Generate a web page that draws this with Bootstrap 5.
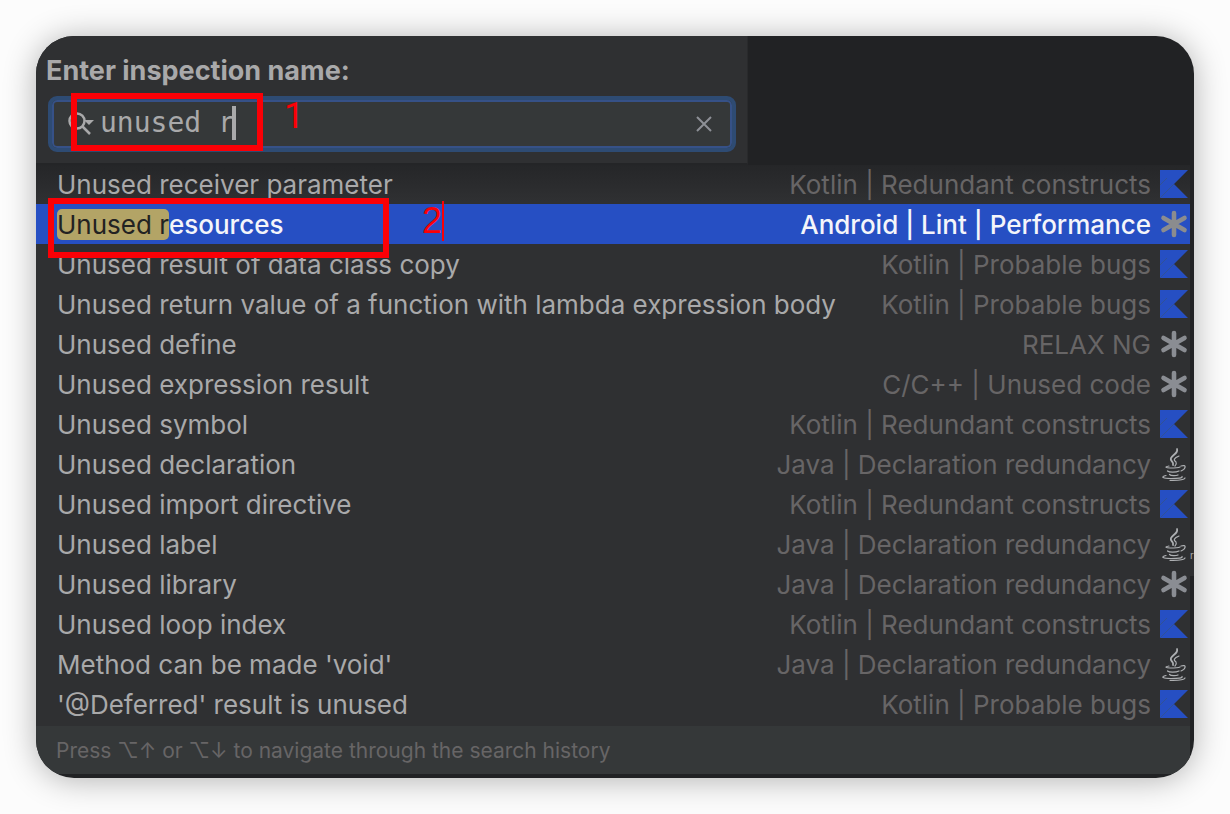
<!DOCTYPE html>
<html lang="en">
<head>
<meta charset="utf-8">
<meta name="viewport" content="width=device-width, initial-scale=1">
<title>Enter inspection name</title>
<link href="https://cdn.jsdelivr.net/npm/bootstrap@5.3.0/dist/css/bootstrap.min.css" rel="stylesheet">
<style>
  body { background: #fcfcfc; font-family: Inter, "Liberation Sans", sans-serif; color: #a9a9aa; }
  .window-frame { margin: 36px; padding: 0 4px 4px 0; background: #212224; border-radius: 38px; box-shadow: 0 2px 32px rgba(0,0,0,.3); overflow: hidden; }
  .search-head { width: 712px; max-width: 100%; height: 129px; padding: 16px 11px 12px 10px; background: #2f3032; border-bottom: 2px solid #242527; border-right: 1px solid #292a2c; }
  .search-head label { font-size: 27px; line-height: 38px; font-weight: 700; }
  .search-box { height: 56px; margin: 6px 0 0 2px; padding: 0 20px 0 12px; border: 4px solid #2e4b73; border-radius: 9px; background: #353839; box-shadow: inset 0 0 0 2px #365187; }
  .search-box input { font: 28px/40px "DejaVu Sans Mono", monospace; color: #a9a9aa; background: none; border: 0; outline: 0; padding: 0 0 2px; caret-color: transparent; }
  .text-caret { left: 180px; top: 6px; width: 4px; height: 34px; background: #a9a9aa; }
  .icon-button { background: none; border: 0; padding: 0; line-height: 0; }
  .results { background: #2f3032; padding-bottom: 2px; }
  .result-row { height: 40px; padding: 0 1px 0 21px; border: 0; background: none; color: #a9a9aa; font-size: 26px; line-height: 38px; text-align: left; white-space: nowrap; }
  .result-row > span { padding-top: 2px; }
  .result-row .group-name { color: #676566; margin-right: 8px; }
  .result-row svg { flex: none; }
  .result-row.top-row { height: 39px; padding-bottom: 1px; background: linear-gradient(#252628, #2f3032 36px); }
  .result-row.picked, .result-row.picked .group-name { background: #264fc3; color: #f4f5fa; font-weight: 500; }
  .match-text { background: #b3a466; color: #222; border-radius: 5px; font-weight: 400; }
  .hint-bar { height: 48px; padding: 1px 20px 0; background: #353839; color: #676566; font-size: 21px; line-height: 48px; }
  .outline-mark { border: 6px solid #fb0006; pointer-events: none; }
  .mark-query { left: 35px; top: 57px; width: 192px; height: 58px; }
  .mark-result { left: 12px; top: 162px; width: 341px; height: 60px; }
  .step { color: #fb0006; font: 36px/40px "Liberation Sans", sans-serif; }
  .step-one { left: 248px; top: 60px; font-family: Roboto, sans-serif; }
  .step-two { left: 386px; top: 165px; border-right: 2px solid #fb0006; }
  .edge-tab { right: 0; top: 494px; width: 4px; height: 46px; background: #2e2f31; font-size: 10px; line-height: 50px; }
</style>
</head>
<body>
<svg class="d-none" aria-hidden="true">
  <symbol id="kotlin" viewBox="0 0 30 30"><path fill="#264fc3" d="M1 1H29L15 15L29 29H1Z"/><path stroke="#315294" stroke-width="1" d="M1 16L8 9M1 29L15 15"/></symbol>
  <symbol id="asterisk" viewBox="0 0 30 30"><path fill="none" stroke="currentColor" stroke-width="4.6" stroke-linecap="round" d="M15 4V26M4.500 9L25.500 21M25.500 9L4.500 21"/></symbol>
  <symbol id="java" viewBox="0 0 30 34"><g fill="none" stroke="#aeb0b3" stroke-linecap="round" stroke-width="1.200"><path stroke-width="1.800" d="M18 2C20 7 10 9 12 13C13 15 15 16 14 18"/><path d="M20 9C15 11 14 13 17 15C18 17 17 18 16 19"/><path d="M10 19C5 20 7 21 11 21C15 21 19 21 21 20M8.500 24C10 25.500 17 25.500 20 24M10.500 27.500C12 29 17 29 19 28M22 19C28 17 27 22 22 24"/><path d="M7 28.500C1 30 4 31.500 12 31.500C19 31.500 24 31 23 29.500M11 33.300C19 33.500 25 33 26 31"/></g></symbol>
</svg>
<main class="window-frame position-relative">
  <header class="search-head">
    <label class="d-block" for="inspection">Enter inspection name:</label>
    <div class="search-box d-flex align-items-center position-relative">
      <button class="icon-button" type="button" aria-label="Search history">
        <svg width="36" height="32" viewBox="0 0 36 32" fill="none" stroke="#a9a9aa" stroke-width="2.500"><circle cx="13" cy="13" r="7.500"/><path d="M18 18L26 26"/><path fill="#a9a9aa" stroke="none" d="M20 12H30L25 17Z"/></svg>
      </button>
      <input class="flex-grow-1" id="inspection" type="text" value="unused r" autocomplete="off" spellcheck="false">
      <span class="text-caret position-absolute"></span>
      <button class="icon-button" type="button" aria-label="Clear">
        <svg width="16" height="16" viewBox="0 0 16 16" stroke="#8d9096" stroke-width="2"><path d="M1 1L15 15M15 1L1 15"/></svg>
      </button>
    </div>
  </header>
  <section class="results d-flex flex-column" aria-label="Inspections">
    <button type="button" class="result-row top-row d-flex align-items-center"><span class="flex-grow-1">Unused receiver parameter</span><span class="group-name">Kotlin | Redundant constructs</span><svg width="30" height="30"><use href="#kotlin"/></svg></button>
    <button type="button" class="result-row picked d-flex align-items-center"><span class="flex-grow-1"><span class="match-text">Unused r</span>esources</span><span class="group-name">Android | Lint | Performance</span><svg width="30" height="30" color="#8b8c8e"><use href="#asterisk"/></svg></button>
    <button type="button" class="result-row d-flex align-items-center"><span class="flex-grow-1">Unused result of data class copy</span><span class="group-name">Kotlin | Probable bugs</span><svg width="30" height="30"><use href="#kotlin"/></svg></button>
    <button type="button" class="result-row d-flex align-items-center"><span class="flex-grow-1">Unused return value of a function with lambda expression body</span><span class="group-name">Kotlin | Probable bugs</span><svg width="30" height="30"><use href="#kotlin"/></svg></button>
    <button type="button" class="result-row d-flex align-items-center"><span class="flex-grow-1">Unused define</span><span class="group-name">RELAX NG</span><svg width="30" height="30" color="#8a8d93"><use href="#asterisk"/></svg></button>
    <button type="button" class="result-row d-flex align-items-center"><span class="flex-grow-1">Unused expression result</span><span class="group-name">C/C++ | Unused code</span><svg width="30" height="30" color="#8a8d93"><use href="#asterisk"/></svg></button>
    <button type="button" class="result-row d-flex align-items-center"><span class="flex-grow-1">Unused symbol</span><span class="group-name">Kotlin | Redundant constructs</span><svg width="30" height="30"><use href="#kotlin"/></svg></button>
    <button type="button" class="result-row d-flex align-items-center"><span class="flex-grow-1">Unused declaration</span><span class="group-name">Java | Declaration redundancy</span><svg width="30" height="34"><use href="#java"/></svg></button>
    <button type="button" class="result-row d-flex align-items-center"><span class="flex-grow-1">Unused import directive</span><span class="group-name">Kotlin | Redundant constructs</span><svg width="30" height="30"><use href="#kotlin"/></svg></button>
    <button type="button" class="result-row d-flex align-items-center"><span class="flex-grow-1">Unused label</span><span class="group-name">Java | Declaration redundancy</span><svg width="30" height="34"><use href="#java"/></svg></button>
    <button type="button" class="result-row d-flex align-items-center"><span class="flex-grow-1">Unused library</span><span class="group-name">Java | Declaration redundancy</span><svg width="30" height="30" color="#8a8d93"><use href="#asterisk"/></svg></button>
    <button type="button" class="result-row d-flex align-items-center"><span class="flex-grow-1">Unused loop index</span><span class="group-name">Kotlin | Redundant constructs</span><svg width="30" height="30"><use href="#kotlin"/></svg></button>
    <button type="button" class="result-row d-flex align-items-center"><span class="flex-grow-1">Method can be made 'void'</span><span class="group-name">Java | Declaration redundancy</span><svg width="30" height="34"><use href="#java"/></svg></button>
    <button type="button" class="result-row d-flex align-items-center"><span class="flex-grow-1">'@Deferred' result is unused</span><span class="group-name">Kotlin | Probable bugs</span><svg width="30" height="30"><use href="#kotlin"/></svg></button>
  </section>
  <footer class="hint-bar">Press ⌥↑ or ⌥↓ to navigate through the search history</footer>
  <div class="outline-mark mark-query position-absolute"></div>
  <span class="step step-one position-absolute">1</span>
  <div class="outline-mark mark-result position-absolute"></div>
  <span class="step step-two position-absolute">2</span>
  <div class="edge-tab position-absolute overflow-hidden">r</div>
</main>
<script src="https://cdn.jsdelivr.net/npm/bootstrap@5.3.0/dist/js/bootstrap.bundle.min.js"></script>
</body>
</html>
